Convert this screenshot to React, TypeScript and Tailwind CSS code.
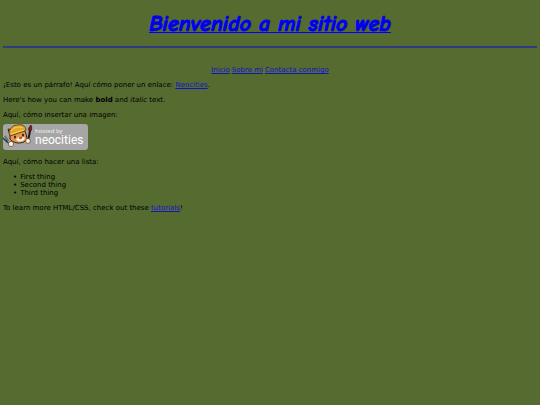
function NeocitiesBadge() {
  return (
    <svg
      role="img"
      aria-label="hosted by neocities"
      viewBox="0 0 85 26"
      className="block h-[26px] w-[85px]"
    >
      <rect width="85" height="26" rx="3" fill="#a6a6a6" />
      {/* fork */}
      <path d="M2 12l3 5M0 14l4 4M3 16l4 5" stroke="#2b3a42" strokeWidth="1.5" fill="none" />
      <path d="M2 12l3 5 3 5" stroke="#9fb0b8" strokeWidth=".7" fill="none" />
      {/* brush */}
      <path d="M27 7L25 17" stroke="#2a1710" strokeWidth="2" />
      <path d="M28 1c-2 2-3 4-2 6h2c1-2 1-4 0-6z" fill="#8d1717" stroke="#32100c" strokeWidth=".7" />
      {/* cat */}
      <path d="M7 11L5 5l4 1c4-4 9-4 12-1l2 5 1 5-3 3c-5 2-11 1-14-3z" fill="#e8964a" stroke="#39230f" strokeWidth="1" />
      <path d="M6 9C7 3 11 1 15 1c4-1 7 1 8 4l-1 2L7 12z" fill="#e0a52a" stroke="#4d3211" strokeWidth=".8" />
      <path d="M8 7c3-4 8-5 12-3M8 10l13-4" stroke="#f7d45a" strokeWidth="1" fill="none" />
      <path d="M13 15c2-2 7-3 9-1-1 4-7 5-9 1z" fill="#fff0da" />
      <ellipse cx="12" cy="13" rx=".9" ry="1.5" fill="#1f1711" />
      <ellipse cx="20" cy="11" rx=".9" ry="1.5" fill="#1f1711" />
      <path d="M16 14l3-1-1 2z" fill="#b04a2d" stroke="#552718" strokeWidth=".5" />
      <circle cx="8" cy="20" r="2.6" fill="#fff4e3" stroke="#5d4026" strokeWidth=".7" />
      <circle cx="25" cy="17" r="2.4" fill="#fff4e3" stroke="#5d4026" strokeWidth=".7" />
      <text x="32" y="9" fontSize="6" fill="#f4f4f4" fontFamily="'Open Sans', sans-serif">hosted by</text>
      <text x="32" y="20" fontSize="12" fill="#fff" fontFamily="Roboto, sans-serif">neocities</text>
    </svg>
  );
}

const link = "text-[#1212cc] underline";
const item = "flex gap-[3px] before:content-['•']";

export default function App() {
  return (
    <div className="min-h-screen bg-[#556b2f] px-[3px] pt-2 font-['DejaVu_Sans',sans-serif] text-[7px] leading-[8px] text-black">
      <h1 className="text-center font-['Comic_Sans_MS','Comic_Neue',cursive] text-[22px] leading-8 font-bold text-[#0000ee] italic underline decoration-1 [-webkit-text-stroke:1px_#0000ee]">
        Bienvenido a mi sitio web
      </h1>
      <hr className="mt-[6px] border-t-2 border-[#303c80]" />
      <nav className="mt-[18px] flex justify-center gap-[2px]">
        <a href="#inicio" className={link}>Inicio</a>
        <a href="#sobre-mi" className={link}>Sobre mi</a>
        <a href="#contacto" className={link}>Contacta conmigo</a>
      </nav>
      <main className="mt-[7px] flex flex-col gap-[7px]">
        <p>
          ¡Esto es un párrafo! Aquí cómo poner un enlace:{" "}
          <a href="#neocities" className={link}>Neocities</a>.
        </p>
        <p>
          Here's how you can make <strong>bold</strong> and <em>italic</em> text.
        </p>
        <p>Aquí, cómo insertar una imagen:</p>
        <a href="#hosted" className="-mt-[2px] block w-fit pb-px">
          <NeocitiesBadge />
        </a>
        <p>Aquí, cómo hacer una lista:</p>
        <ul className="pl-[10px]">
          <li className={item}>First thing</li>
          <li className={item}>Second thing</li>
          <li className={item}>Third thing</li>
        </ul>
        <p>
          To learn more HTML/CSS, check out these{" "}
          <a href="#tutorials" className={link}>tutorials</a>!
        </p>
      </main>
    </div>
  );
}
